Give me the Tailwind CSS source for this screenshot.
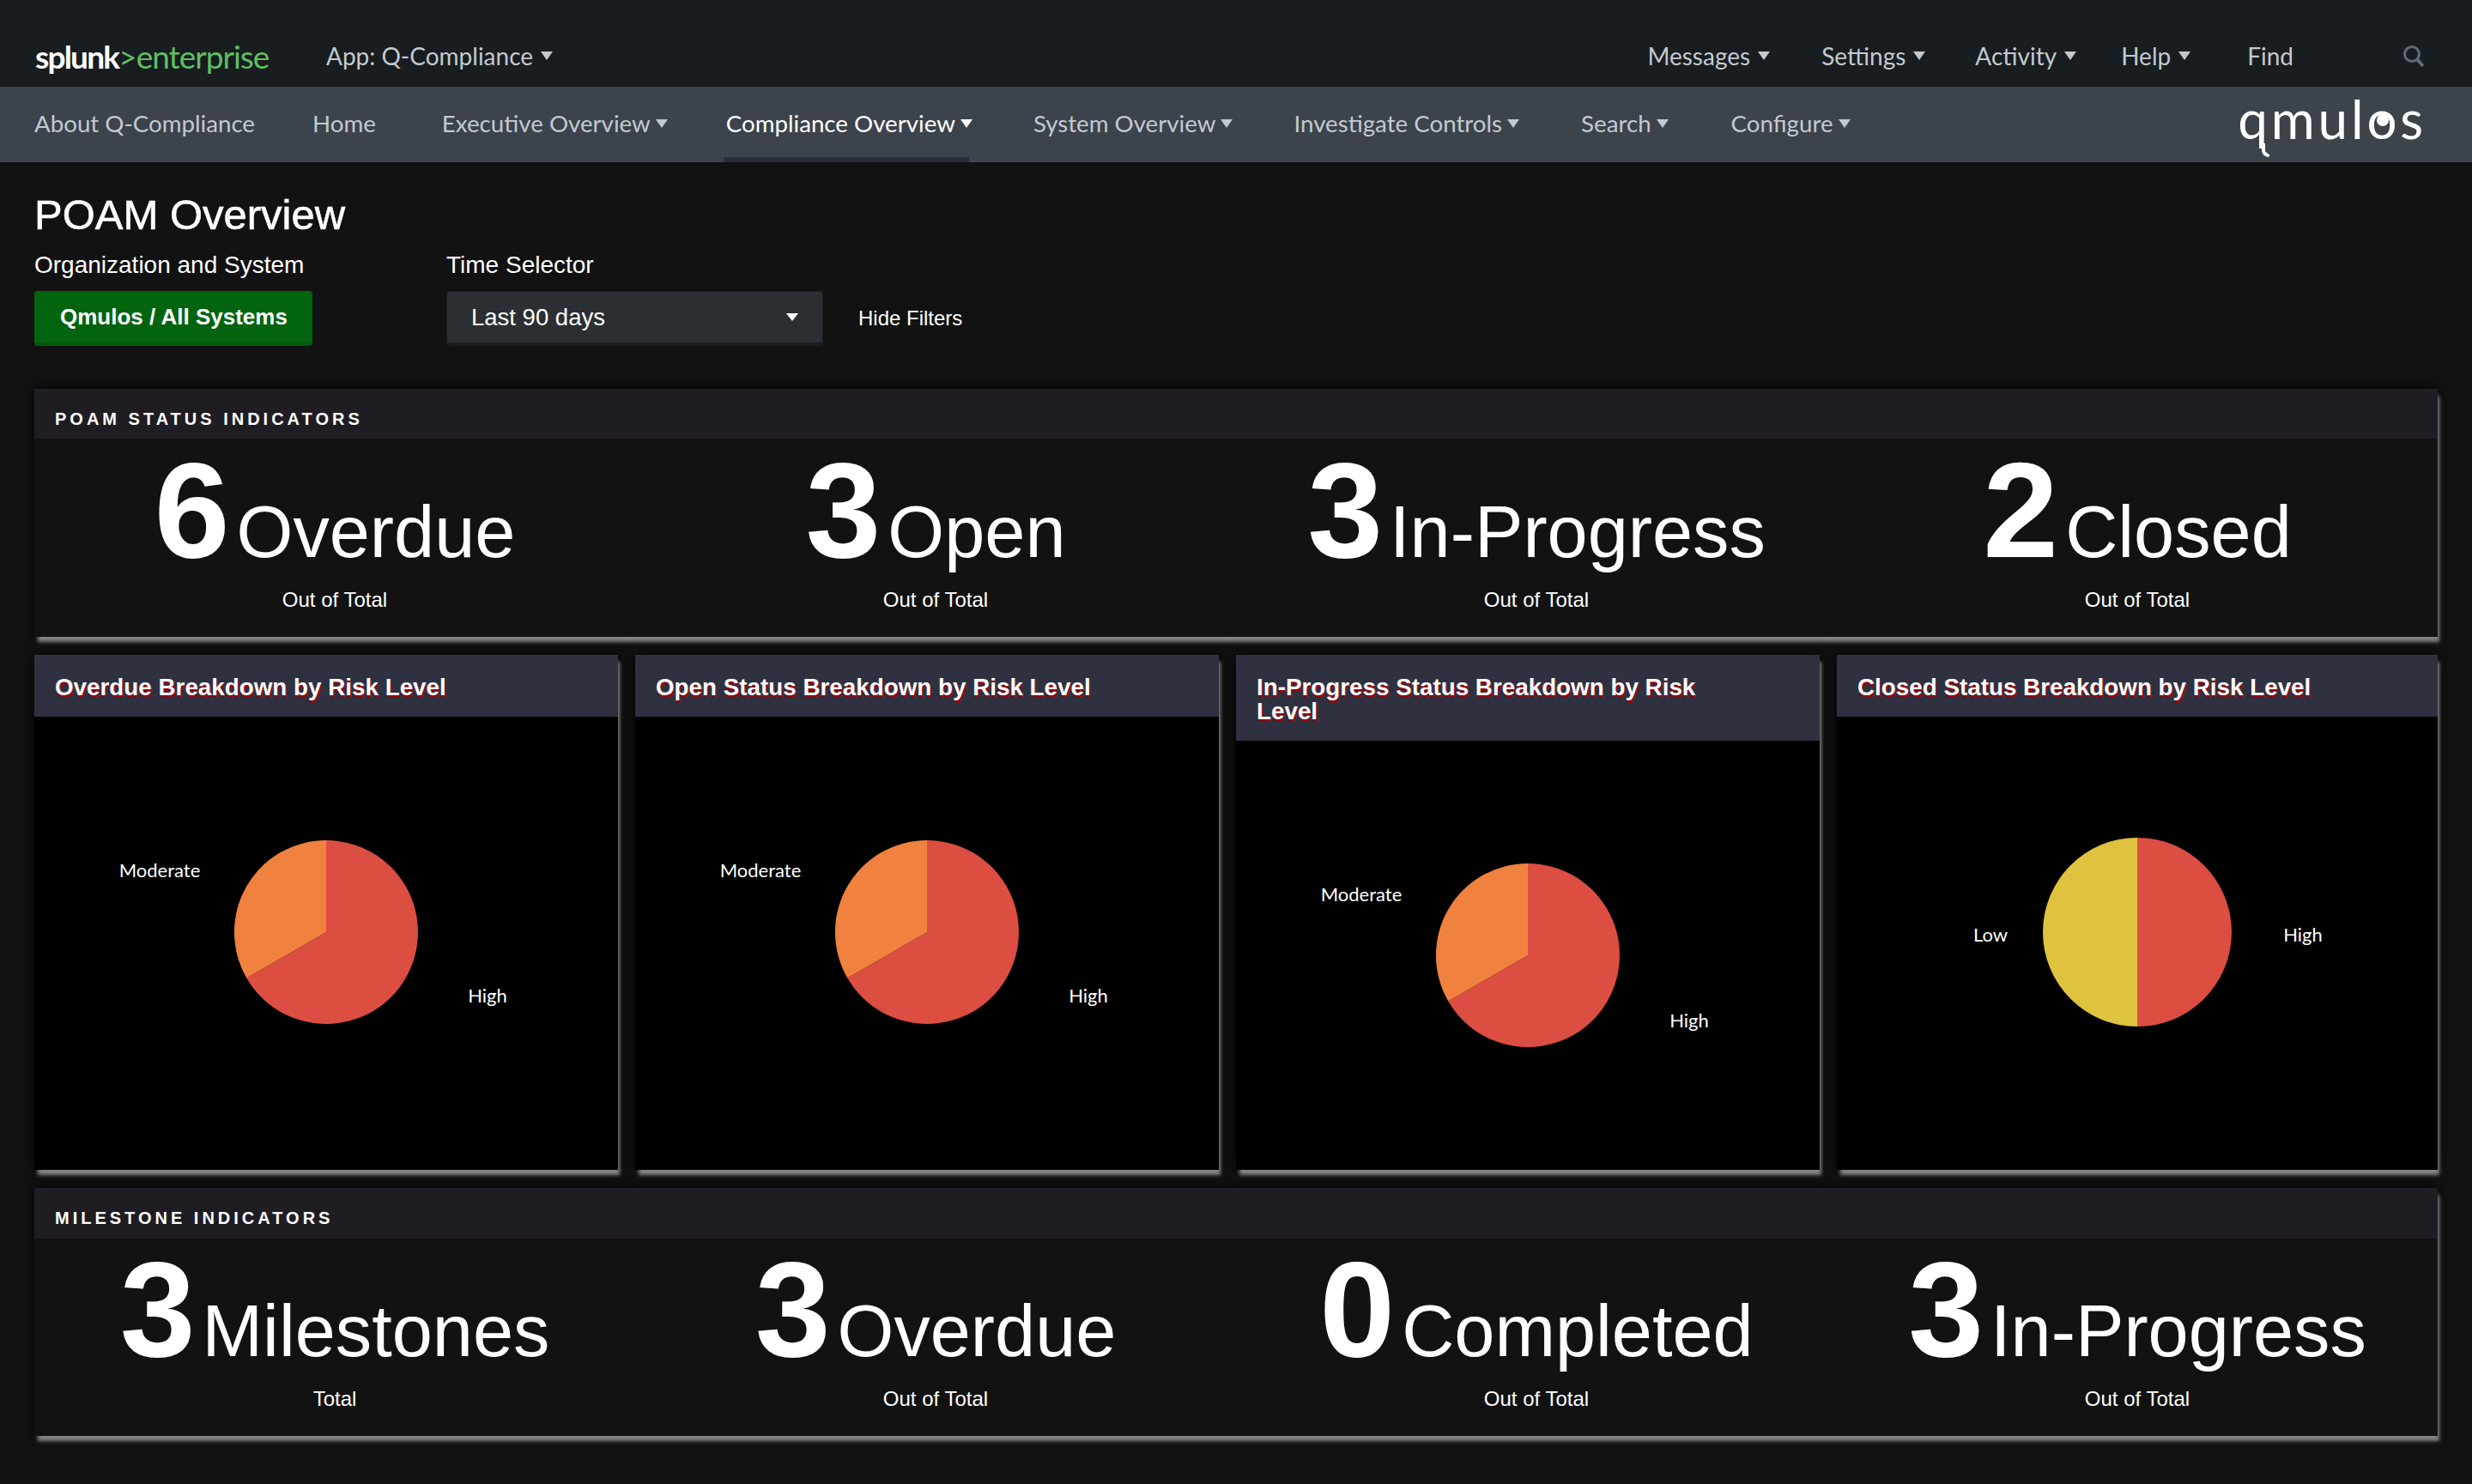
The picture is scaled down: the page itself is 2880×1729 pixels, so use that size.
<!DOCTYPE html>
<html lang="en">
<head>
  <meta charset="UTF-8">
  <title>POAM Overview</title>
  <script src="https://cdn.jsdelivr.net/npm/@tailwindcss/browser@4"></script>
</head>
<body class="bg-[#121212] font-['Liberation_Sans',sans-serif] text-white w-[2880px] h-[1729px] overflow-hidden">

  <!-- Splunk bar -->
  <header class="h-[101px] bg-[#181d20] flex items-center pt-[29px] pl-[40px] font-['Lato',sans-serif] text-[28px] text-[#c3c9d0]">
    <div class="w-[340px] pl-[1px] text-[37px] leading-none tracking-[-1px] text-[#62bd62]"><span class="font-bold tracking-[-1.8px] text-white">splunk</span>&gt;enterprise</div>
    <div class="flex items-center gap-[9px]">App: Q-Compliance
      <svg class="w-[14px] h-[10px]" viewBox="0 0 14 10"><polygon points="0,0 14,0 7,10" fill="#c3c9d0"/></svg>
    </div>
    <div class="flex items-center ml-auto pr-[55px]">
      <div class="flex items-center gap-[9px]">Messages <svg class="w-[14px] h-[10px]" viewBox="0 0 14 10"><polygon points="0,0 14,0 7,10" fill="#c3c9d0"/></svg></div>
      <div class="flex items-center gap-[9px] ml-[60px]">Settings <svg class="w-[14px] h-[10px]" viewBox="0 0 14 10"><polygon points="0,0 14,0 7,10" fill="#c3c9d0"/></svg></div>
      <div class="flex items-center gap-[9px] ml-[58px]">Activity <svg class="w-[14px] h-[10px]" viewBox="0 0 14 10"><polygon points="0,0 14,0 7,10" fill="#c3c9d0"/></svg></div>
      <div class="flex items-center gap-[9px] ml-[52px]">Help <svg class="w-[14px] h-[10px]" viewBox="0 0 14 10"><polygon points="0,0 14,0 7,10" fill="#c3c9d0"/></svg></div>
      <div class="ml-[66px]">Find</div>
      <svg class="w-[26px] h-[26px] ml-[127px]" viewBox="0 0 26 26" fill="none" stroke="#5f6b78" stroke-width="3"><circle cx="11" cy="11" r="8.5"/><path d="M17 17l7 8" stroke-width="4"/></svg>
    </div>
  </header>

  <!-- App nav -->
  <nav class="relative h-[88px] bg-[#3c434b] flex items-center pl-[40px] pb-[2px] font-['Lato',sans-serif] text-[27.7px] text-[#c3c9d0]">
    <a>About Q-Compliance</a>
    <a class="ml-[67px]">Home</a>
    <a class="ml-[77px] flex items-center gap-[6px]">Executive Overview <svg class="w-[14px] h-[10px]" viewBox="0 0 14 10"><polygon points="0,0 14,0 7,10" fill="#c3c9d0"/></svg></a>
    <a class="relative ml-[68px] h-full flex items-center gap-[6px] text-white">Compliance Overview <svg class="w-[14px] h-[10px]" viewBox="0 0 14 10"><polygon points="0,0 14,0 7,10" fill="#fff"/></svg>
      <span class="absolute left-[-3px] right-[4px] bottom-[-2px] h-[6px] bg-[#2b2d3f]"></span></a>
    <a class="ml-[71px] flex items-center gap-[6px]">System Overview <svg class="w-[14px] h-[10px]" viewBox="0 0 14 10"><polygon points="0,0 14,0 7,10" fill="#c3c9d0"/></svg></a>
    <a class="ml-[71px] flex items-center gap-[6px]">Investigate Controls <svg class="w-[14px] h-[10px]" viewBox="0 0 14 10"><polygon points="0,0 14,0 7,10" fill="#c3c9d0"/></svg></a>
    <a class="ml-[72px] flex items-center gap-[6px]">Search <svg class="w-[14px] h-[10px]" viewBox="0 0 14 10"><polygon points="0,0 14,0 7,10" fill="#c3c9d0"/></svg></a>
    <a class="ml-[73px] flex items-center gap-[6px]">Configure <svg class="w-[14px] h-[10px]" viewBox="0 0 14 10"><polygon points="0,0 14,0 7,10" fill="#c3c9d0"/></svg></a>
    <div class="relative ml-auto mr-[53px] mb-[13px] text-[62px] leading-none tracking-[3.8px] text-white">qmulos
      <span class="absolute left-[162px] top-[26px] w-[14px] h-[14px] rounded-full bg-white"></span>
      <svg class="absolute left-[27px] top-[60px] w-[12px] h-[16px]" viewBox="0 0 12 16" fill="none" stroke="#fff" stroke-width="4" stroke-linecap="round"><path d="M3 0v8q0 4 5 6"/></svg>
    </div>
  </nav>

  <main class="px-[40px]">
    <h1 class="pt-[40px] text-[49px] leading-[42px] [-webkit-text-stroke:0.6px_white]">POAM Overview</h1>

    <!-- Filters -->
    <div class="flex items-end mt-[21px]">
      <div class="w-[480px]">
        <div class="text-[28px] leading-[34px]">Organization and System</div>
        <div class="mt-[13px] w-[324px] h-[64px] flex items-center pl-[30px] rounded-[4px] bg-[#03640f] border-b-[4px] border-[#02590d] font-bold text-[26px]">Qmulos / All Systems</div>
      </div>
      <div>
        <div class="text-[28px] leading-[34px]">Time Selector</div>
        <div class="mt-[13px] w-[439px] h-[64px] flex items-center justify-between px-[28px] rounded-[4px] bg-[#2b2f33] border border-[#1a1c1f] border-b-[4px] text-[27.5px]">Last 90 days
          <svg class="w-[14px] h-[9px]" viewBox="0 0 14 9"><polygon points="0,0 14,0 7,9" fill="#fff"/></svg>
        </div>
      </div>
      <div class="ml-[41px] h-[64px] flex items-center text-[24px]">Hide Filters</div>
    </div>

    <!-- POAM status -->
    <section class="mt-[50px] rounded-t-[4px] shadow-[3px_7px_4px_-1px_#858585,0_0_14px_#000]">
      <h2 class="h-[58px] bg-[#1f1d23] flex items-center pt-[12px] pl-[24px] font-bold text-[20px] tracking-[4px] uppercase">POAM Status Indicators</h2>
      <div class="h-[231px] bg-[#121212] grid grid-cols-4 text-center">
        <div class="pt-[9px]"><div class="flex justify-center items-baseline gap-[8px] text-[84.7px] leading-[148px]"><b class="text-[158px]">6</b>Overdue</div><div class="mt-[-9px] text-[24px] leading-[28px]">Out of Total</div></div>
        <div class="pt-[9px]"><div class="flex justify-center items-baseline gap-[8px] text-[84.7px] leading-[148px]"><b class="text-[158px]">3</b>Open</div><div class="mt-[-9px] text-[24px] leading-[28px]">Out of Total</div></div>
        <div class="pt-[9px]"><div class="flex justify-center items-baseline gap-[8px] text-[84.7px] leading-[148px]"><b class="text-[158px]">3</b>In-Progress</div><div class="mt-[-9px] text-[24px] leading-[28px]">Out of Total</div></div>
        <div class="pt-[9px]"><div class="flex justify-center items-baseline gap-[8px] text-[84.7px] leading-[148px]"><b class="text-[158px]">2</b>Closed</div><div class="mt-[-9px] text-[24px] leading-[28px]">Out of Total</div></div>
      </div>
    </section>

    <!-- Breakdown cards -->
    <div class="grid grid-cols-[680px_680px_680px_700px] gap-[20px] mt-[21px] h-[600px]">
      <div class="flex flex-col bg-black shadow-[3px_7px_4px_-1px_#858585,0_0_14px_#000]">
        <h3 class="bg-[#2f3140] pl-[24px] pr-[70px] pt-[24px] pb-[20px] font-bold text-[27.8px] leading-[28px] [text-shadow:1px_3px_0_#8a0a12]">Overdue Breakdown by Risk Level</h3>
        <svg class="block" width="680" height="528" viewBox="0 0 680 528" font-family="Lato, sans-serif" font-size="22" fill="#fff">
          <path d="M340 251 L340 144 A107 107 0 1 1 247.3 304.5 Z" fill="#dc4e41"/>
          <path d="M340 251 L247.3 304.5 A107 107 0 0 1 340 144 Z" fill="#f1813f"/>
          <text x="146" y="181" text-anchor="middle" dominant-baseline="middle">Moderate</text>
          <text x="528" y="327" text-anchor="middle" dominant-baseline="middle">High</text>
        </svg>
      </div>
      <div class="flex flex-col bg-black shadow-[3px_7px_4px_-1px_#858585,0_0_14px_#000]">
        <h3 class="bg-[#2f3140] pl-[24px] pr-[70px] pt-[24px] pb-[20px] font-bold text-[27.8px] leading-[28px] [text-shadow:1px_3px_0_#8a0a12]">Open Status Breakdown by Risk Level</h3>
        <svg class="block" width="680" height="528" viewBox="0 0 680 528" font-family="Lato, sans-serif" font-size="22" fill="#fff">
          <path d="M340 251 L340 144 A107 107 0 1 1 247.3 304.5 Z" fill="#dc4e41"/>
          <path d="M340 251 L247.3 304.5 A107 107 0 0 1 340 144 Z" fill="#f1813f"/>
          <text x="146" y="181" text-anchor="middle" dominant-baseline="middle">Moderate</text>
          <text x="528" y="327" text-anchor="middle" dominant-baseline="middle">High</text>
        </svg>
      </div>
      <div class="flex flex-col bg-black shadow-[3px_7px_4px_-1px_#858585,0_0_14px_#000]">
        <h3 class="bg-[#2f3140] pl-[24px] pr-[70px] pt-[24px] pb-[20px] font-bold text-[27.8px] leading-[28px] [text-shadow:1px_3px_0_#8a0a12]">In-Progress Status Breakdown by Risk Level</h3>
        <svg class="block" width="680" height="500" viewBox="0 0 680 500" font-family="Lato, sans-serif" font-size="22" fill="#fff">
          <path d="M340 250 L340 143 A107 107 0 1 1 247.3 303.5 Z" fill="#dc4e41"/>
          <path d="M340 250 L247.3 303.5 A107 107 0 0 1 340 143 Z" fill="#f1813f"/>
          <text x="146" y="181" text-anchor="middle" dominant-baseline="middle">Moderate</text>
          <text x="528" y="328" text-anchor="middle" dominant-baseline="middle">High</text>
        </svg>
      </div>
      <div class="flex flex-col bg-black shadow-[3px_7px_4px_-1px_#858585,0_0_14px_#000]">
        <h3 class="bg-[#2f3140] pl-[24px] pr-[70px] pt-[24px] pb-[20px] font-bold text-[27.8px] leading-[28px] [text-shadow:1px_3px_0_#8a0a12]">Closed Status Breakdown by Risk Level</h3>
        <svg class="block" width="700" height="528" viewBox="0 0 700 528" font-family="Lato, sans-serif" font-size="22" fill="#fff">
          <path d="M350 251 L350 141 A110 110 0 0 1 350 361 Z" fill="#dc4e41"/>
          <path d="M350 251 L350 361 A110 110 0 0 1 350 141 Z" fill="#dfc23e"/>
          <text x="179" y="256" text-anchor="middle" dominant-baseline="middle">Low</text>
          <text x="543" y="256" text-anchor="middle" dominant-baseline="middle">High</text>
        </svg>
      </div>
    </div>

    <!-- Milestones -->
    <section class="mt-[21px] rounded-t-[4px] shadow-[3px_7px_4px_-1px_#858585,0_0_14px_#000]">
      <h2 class="h-[59px] bg-[#1f1d23] flex items-center pt-[10px] pl-[24px] font-bold text-[20px] tracking-[4px] uppercase">Milestone Indicators</h2>
      <div class="h-[230px] bg-[#121212] grid grid-cols-4 text-center">
        <div class="pt-[8px]"><div class="flex justify-center items-baseline gap-[8px] text-[84.7px] leading-[148px]"><b class="text-[158px]">3</b>Milestones</div><div class="mt-[-9px] text-[24px] leading-[28px]">Total</div></div>
        <div class="pt-[8px]"><div class="flex justify-center items-baseline gap-[8px] text-[84.7px] leading-[148px]"><b class="text-[158px]">3</b>Overdue</div><div class="mt-[-9px] text-[24px] leading-[28px]">Out of Total</div></div>
        <div class="pt-[8px]"><div class="flex justify-center items-baseline gap-[8px] text-[84.7px] leading-[148px]"><b class="text-[158px]">0</b>Completed</div><div class="mt-[-9px] text-[24px] leading-[28px]">Out of Total</div></div>
        <div class="pt-[8px]"><div class="flex justify-center items-baseline gap-[8px] text-[84.7px] leading-[148px]"><b class="text-[158px]">3</b>In-Progress</div><div class="mt-[-9px] text-[24px] leading-[28px]">Out of Total</div></div>
      </div>
    </section>
  </main>
</body>
</html>
